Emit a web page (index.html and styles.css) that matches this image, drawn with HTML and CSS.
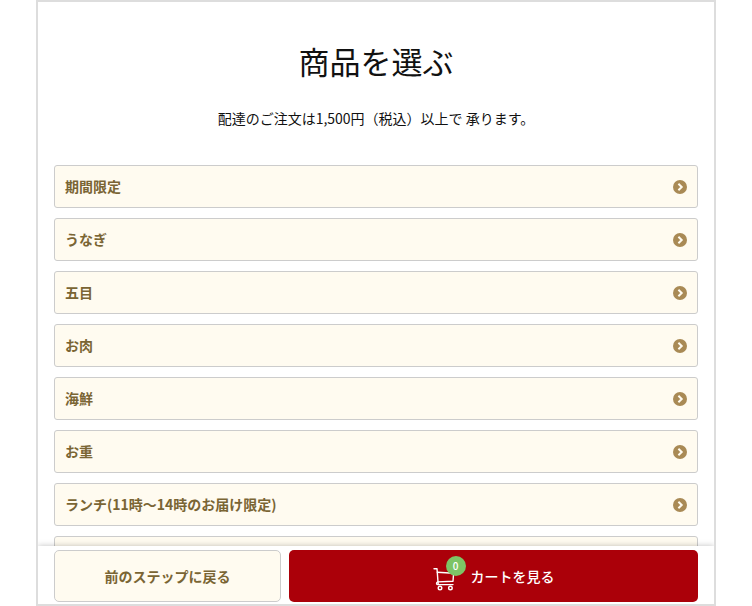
FILE: index.html
```html
<!DOCTYPE html>
<html lang="ja">
<head>
    <meta charset="UTF-8">
    <meta name="viewport" content="width=device-width, initial-scale=1.0">
    <title>商品を選ぶ</title>
    <link rel="stylesheet" href="styles.css">
</head>
<body>

<svg class="defs" aria-hidden="true">
    <symbol id="arrow" viewBox="0 0 14 14">
        <circle cx="7" cy="7" r="7" fill="#a98a55"/>
        <path d="M5.4 3.8 8.7 7l-3.3 3.2" fill="none" stroke="#fffbf0" stroke-width="2"/>
    </symbol>
</svg>

<div class="frame">
    <main class="content">
        <h1 class="title">商品を選ぶ</h1>
        <p class="note">配達のご注文は1,500円（税込）以上で 承ります。</p>

        <ul class="category-list">
            <li><a class="category" href="#">期間限定<svg class="arrow"><use href="#arrow"/></svg></a></li>
            <li><a class="category" href="#">うなぎ<svg class="arrow"><use href="#arrow"/></svg></a></li>
            <li><a class="category" href="#">五目<svg class="arrow"><use href="#arrow"/></svg></a></li>
            <li><a class="category" href="#">お肉<svg class="arrow"><use href="#arrow"/></svg></a></li>
            <li><a class="category" href="#">海鮮<svg class="arrow"><use href="#arrow"/></svg></a></li>
            <li><a class="category" href="#">お重<svg class="arrow"><use href="#arrow"/></svg></a></li>
            <li><a class="category" href="#">ランチ(11時〜14時のお届け限定)<svg class="arrow"><use href="#arrow"/></svg></a></li>
            <li><a class="category" href="#"></a></li>
        </ul>
    </main>

    <footer class="actions">
        <button class="btn btn-back" type="button">前のステップに戻る</button>
        <button class="btn btn-cart" type="button">
            <span class="cart">
                <svg class="cart-icon" viewBox="0 0 24 24" fill="none" stroke="#fff" stroke-width="1.4" stroke-linecap="round" stroke-linejoin="round">
                    <path d="M1 1.8h3l1.2 15.6"/>
                    <path d="M4.3 5.2 20.6 6.2 20 14.2 5 14.9"/>
                    <path d="M5.2 17.6h14.8M5 14.9c-2 .4-2 2.7.2 2.7"/>
                    <circle cx="7" cy="21" r="1.8"/>
                    <circle cx="17.4" cy="21" r="1.8"/>
                </svg>
                <span class="badge">0</span>
            </span>
            カートを見る
        </button>
    </footer>
</div>

</body>
</html>
```
FILE: styles.css
```css
* {
    box-sizing: border-box;
}

body {
    margin: 0 36px;
    background-color: #fff;
    color: #111;
    font-family: "Noto Sans CJK JP", sans-serif;
    font-size: 14px;
    line-height: 21px;
}

.defs {
    display: none;
}

.frame {
    display: flex;
    flex-direction: column;
    height: 100vh;
    border: 2px solid #ddd;
}

.content {
    flex: 1;
    min-height: 0;
    overflow: hidden;
    padding: 36px 16px 0;
}

.title {
    margin: 0 0 24px;
    font-size: 31px;
    font-weight: 400;
    line-height: 46px;
    text-align: center;
}

.note {
    margin: 0 0 36px;
    text-align: center;
}

.category-list {
    display: grid;
    gap: 10px;
    margin: 0;
    padding: 0;
    list-style: none;
}

.category {
    display: flex;
    align-items: center;
    justify-content: space-between;
    min-height: 43px;
    padding: 0 10px;
    background-color: #fffbf0;
    border: 1px solid #ccc;
    border-radius: 3px;
    color: #7a6534;
    font-weight: 700;
    text-decoration: none;
}

.arrow {
    width: 14px;
    height: 14px;
}

.actions {
    position: relative;
    display: grid;
    grid-template-columns: 5fr 9fr;
    gap: 8px;
    padding: 4px 16px 2px;
    background-color: #fff;
    box-shadow: 0 0 6px rgba(0, 0, 0, 0.25);
    clip-path: inset(-8px 0 0 0);
}

.btn {
    display: flex;
    align-items: center;
    justify-content: center;
    height: 52px;
    padding: 0;
    border-radius: 5px;
    font: inherit;
    font-weight: 500;
    cursor: pointer;
}

.btn-back {
    background-color: #fffbf0;
    border: 1px solid #ccc;
    color: #7a6534;
    font-weight: 700;
}

.btn-cart {
    gap: 14px;
    background-color: #ab0009;
    border: 0;
    color: #fff;
}

.cart {
    position: relative;
    display: flex;
    padding-top: 6px;
}

.cart-icon {
    width: 24px;
    height: 24px;
}

.badge {
    position: absolute;
    top: -5px;
    left: 13px;
    width: 20px;
    height: 20px;
    background-color: #7dc465;
    border-radius: 50%;
    font-size: 10px;
    line-height: 20px;
    text-align: center;
}
```
